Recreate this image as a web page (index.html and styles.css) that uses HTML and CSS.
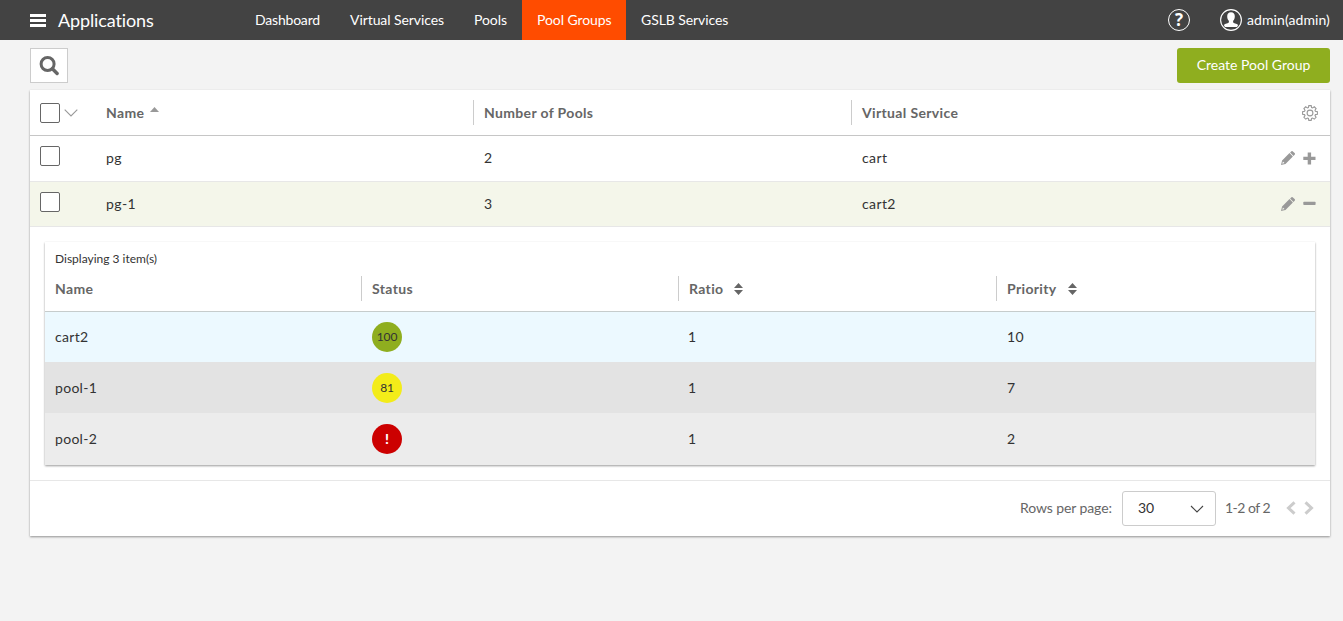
FILE: index.html
```html
<!DOCTYPE html>
<html lang="en">
<head>
<meta charset="utf-8">
<title>Applications - Pool Groups</title>
<link rel="stylesheet" href="styles.css">
</head>
<body>
<svg class="symbols" width="0" height="0">
  <symbol id="pencil" viewBox="0 0 14 14"><path d="M10.200.4a1.200 1.200 0 0 1 1.700 0l1.700 1.700a1.200 1.200 0 0 1 0 1.700l-1.100 1.100-3.400-3.400zM8.500 2.100l3.400 3.400-7.400 7.400L0 14l1.100-4.500zM1.900 10.500l-.6 2.200 2.200-.6z"/></symbol>
  <symbol id="sort" viewBox="0 0 9 12"><path d="M4.500 0L9 5H0zM0 7h9l-4.500 5z"/></symbol>
</svg>
<header class="topbar">
  <div class="brand">
    <svg class="burger" width="16" height="13" viewBox="0 0 16 13"><path d="M0 0h16v3H0zM0 5h16v3H0zM0 10h16v3H0z"/></svg>
    <span class="brand-name">Applications</span>
  </div>
  <nav class="nav">
    <a class="nav-item nav-dashboard">Dashboard</a>
    <a class="nav-item nav-vs">Virtual Services</a>
    <a class="nav-item nav-pools">Pools</a>
    <a class="nav-item nav-groups active">Pool Groups</a>
    <a class="nav-item nav-gslb">GSLB Services</a>
  </nav>
  <div class="account">
    <div class="help">?</div>
    <svg class="avatar" width="22" height="22" viewBox="0 0 22 22"><circle cx="11" cy="11" r="10.400" fill="none" stroke="#fff" stroke-width="1.100"/><path fill="#fff" d="M11 3.200c2.600 0 3.900 1.700 3.800 4.200 0 2.100-.9 3.500-1.700 4.400v1.500c.3 1 3.700 1.200 5 2.700-.5 1.200-.8 1.700-1.200 2H5.100c-.4-.3-.7-.8-1.200-2 1.300-1.500 4.700-1.700 5-2.700v-1.500c-.8-.9-1.700-2.300-1.700-4.400C7.100 4.900 8.400 3.200 11 3.200z"/></svg>
    <span class="user">admin(admin)</span>
  </div>
</header>
<main class="content">
  <div class="toolbar">
    <button class="search"><svg width="20" height="20" viewBox="0 0 20 20" fill="none" stroke="#666"><circle cx="8.600" cy="8" r="6.500" stroke-width="3"/><path d="M13.400 12.800l4.700 4.700" stroke-width="3.400" stroke-linecap="round"/></svg></button>
    <button class="create">Create Pool Group</button>
  </div>
  <section class="card">
    <div class="row head">
      <div class="check"><i class="box"></i><svg width="14" height="8" viewBox="0 0 14 8" fill="none" stroke="#999" stroke-width="1.100"><path d="M.7.700L7 7l6.300-6.300"/></svg></div>
      <div class="cell">Name<svg class="asc" width="9" height="5" viewBox="0 0 9 5"><path d="M4.500 0L9 5H0z" fill="#999"/></svg></div>
      <div class="cell divided">Number of Pools</div>
      <div class="cell divided">Virtual Service</div>
      <div class="actions"><svg class="gear" width="16" height="16" viewBox="0 0 16 16" fill="none" stroke="#999" stroke-width="1.100"><path d="M6.800.6h2.400l.4 1.900 1 .4 1.700-1.100 1.800 1.800L13 5.300l.4 1 2 .4v2.500l-2 .4-.4 1 1.100 1.700-1.800 1.800-1.700-1.100-1 .4-.4 2H6.800l-.4-2-1-.4-1.700 1.100-1.800-1.800L3 10.600l-.4-1-2-.4V6.700l2-.4.4-1-1.100-1.700 1.800-1.800 1.700 1.100 1-.4z"/><circle cx="8" cy="8" r="2.900"/></svg></div>
    </div>
    <div class="row">
      <div class="check"><i class="box"></i></div>
      <div class="cell">pg</div><div class="cell shifted">2</div><div class="cell shifted">cart</div>
      <div class="actions"><svg width="14" height="14"><use href="#pencil"/></svg><svg width="13" height="13" viewBox="0 0 13 13"><path d="M4.700.500h3.400v4.200h4.400v3.300H8.100v4.500H4.700V8H.3V4.700h4.400z"/></svg></div>
    </div>
    <div class="row selected">
      <div class="check"><i class="box"></i></div>
      <div class="cell">pg-1</div><div class="cell shifted">3</div><div class="cell shifted">cart2</div>
      <div class="actions"><svg width="14" height="14"><use href="#pencil"/></svg><svg width="13" height="13" viewBox="0 0 13 13"><rect x=".3" y="4.700" width="12.300" height="3.300" rx=".7"/></svg></div>
    </div>
    <div class="details">
      <div class="inner">
        <div class="count"><span>Displaying 3 item(s)</span></div>
        <div class="irow ihead">
          <div class="icell">Name</div>
          <div class="icell divided">Status</div>
          <div class="icell divided">Ratio<svg class="sort" width="9" height="12"><use href="#sort"/></svg></div>
          <div class="icell divided">Priority<svg class="sort" width="9" height="12"><use href="#sort"/></svg></div>
        </div>
        <div class="irow blue"><div class="icell">cart2</div><div class="icell"><b class="score green">100</b></div><div class="icell">1</div><div class="icell shifted">10</div></div>
        <div class="irow gray"><div class="icell">pool-1</div><div class="icell"><b class="score yellow">81</b></div><div class="icell">1</div><div class="icell shifted">7</div></div>
        <div class="irow light"><div class="icell">pool-2</div><div class="icell"><b class="score red">!</b></div><div class="icell">1</div><div class="icell shifted">2</div></div>
      </div>
    </div>
    <footer class="pager">
      <span class="rpp">Rows per page:</span>
      <div class="select"><span>30</span><svg width="14" height="8" viewBox="0 0 14 8" fill="none" stroke="#444" stroke-width="1.100"><path d="M1 1l6 6 6-6"/></svg></div>
      <span class="range">1-2 of 2</span>
      <svg class="arrows" width="28" height="14" viewBox="0 0 28 14" fill="none" stroke="#ccc" stroke-width="3"><path d="M8.500 1.300L2.500 7l6 5.700M19.500 1.300l6 5.700-6 5.700"/></svg>
    </footer>
  </section>
</main>
</body>
</html>
```
FILE: styles.css
```css
* { box-sizing: border-box; }
body { margin: 0; height: 621px; overflow: hidden; background: #f3f3f3; color: #333; font: 14px/20px Lato, "Open Sans", sans-serif; }
svg { display: block; flex: none; }
.symbols { position: absolute; }
button { font: inherit; margin: 0; padding: 0; border: 0; }

.topbar { display: flex; height: 40px; background: #434343; color: #fff; }
.brand { display: flex; align-items: center; width: 240px; padding-left: 30px; gap: 12px; }
.burger { fill: #fff; }
.brand-name { font-size: 18px; letter-spacing: -.12px; }
.nav { display: flex; }
.nav-item { padding: 10px 0 10px 15px; white-space: nowrap; letter-spacing: -.08px; }
.nav-dashboard { width: 95px; letter-spacing: -.2px; }
.nav-vs { width: 124px; }
.nav-pools { width: 63px; }
.nav-groups { width: 104px; }
.nav-gslb { width: 120px; }
.active { background: #ff4c00; }
.account { display: flex; align-items: center; margin-left: auto; padding-right: 12px; }
.help { width: 22px; height: 22px; margin-right: 30px; border: 1px solid #fff; border-radius: 50%; text-align: center; font: 700 17px/20px "Open Sans", sans-serif; }
.user { width: 84px; margin-left: 5px; white-space: nowrap; letter-spacing: .08px; }

.content { padding: 8px 13px 0 30px; }
.toolbar { display: flex; justify-content: space-between; height: 42px; }
.search { display: flex; align-items: center; justify-content: center; width: 38px; height: 35px; border: 1px solid #ccc; background: #fff; }
.create { width: 153px; height: 35px; padding-bottom: 2px; border-radius: 3px; background: #8fae1f; color: #fff; }

.card { height: 446px; background: #fff; box-shadow: 0 1px 2px rgba(0,0,0,.4); }
.row { display: grid; grid-template-columns: 66px 377px 378px 1fr 58px; height: 46px; border-bottom: 1px solid #e7e7e7; align-items: center; letter-spacing: .4px; }
.row:not(.head) { padding-bottom: 1px; }
.cell { padding-left: 10px; display: flex; align-items: center; }
.cell.shifted, .icell.shifted { padding-left: 11px; }
.row.head { border-color: #c6c6c6; color: #666; font-weight: 700; letter-spacing: .35px; }
.divided { height: 25px; border-left: 1px solid #ccc; }
.check { display: flex; align-items: center; align-self: start; padding: 10px 0 0 10px; gap: 4px; }
.head .check { padding-top: 13px; }
.box { width: 20px; height: 20px; border: 1px solid #666; border-radius: 2px; background: #fff; }
.asc { margin: -6px 0 0 6px; }
.row.selected { height: 45px; padding-bottom: 0; background: #f4f6ea; }
.actions { display: flex; align-items: center; gap: 8px; padding-left: 9px; fill: #999; }
.selected .actions { padding-bottom: 1px; }
.head .actions { padding-left: 29px; }
.gear { margin-left: .5px; }

.details { height: 254px; padding: 15px; border-bottom: 1px solid #e7e7e7; }
.inner { height: 223px; box-shadow: 0 1px 2px rgba(0,0,0,.4); }
.count { height: 24px; padding: 7px 0 0 10px; font-size: 12px; }
.irow { display: grid; grid-template-columns: 316px 317px 318px 1fr; align-items: center; letter-spacing: .3px; }
.icell { display: flex; align-items: center; padding-left: 10px; }
.irow.ihead { height: 46px; border-bottom: 1px solid #c6cccc; color: #666; font-weight: 700; letter-spacing: .35px; }
.sort { margin-left: 11px; fill: #666; }
.blue { height: 50px; background: #ecf9ff; }
.gray { height: 51px; padding-top: 1px; background: #e3e3e3; }
.light { height: 52px; background: #ececec; }
.score { width: 30px; height: 30px; margin-left: 1px; border-radius: 50%; text-align: center; font-weight: 400; font-size: 12px; line-height: 30px; letter-spacing: -.2px; }
.green { background: #8fae1f; }
.yellow { background: #f3ec19; }
.red { background: #c00; color: #fff; font-weight: 900; font-size: 14px; }

.pager { display: flex; align-items: center; height: 55px; color: #666; white-space: nowrap; }
.rpp { width: 102px; margin-left: 990px; padding-bottom: 2px; letter-spacing: -.1px; }
.select { display: flex; align-items: center; justify-content: space-between; width: 94px; height: 35px; padding: 0 11px 0 15px; border: 1px solid #ccc; border-radius: 3px; color: #333; }
.select span, .range { padding-bottom: 2px; }
.range { width: 60px; margin-left: 9px; letter-spacing: -.5px; }
.arrows { margin-left: 1px; margin-bottom: 2px; }
```
